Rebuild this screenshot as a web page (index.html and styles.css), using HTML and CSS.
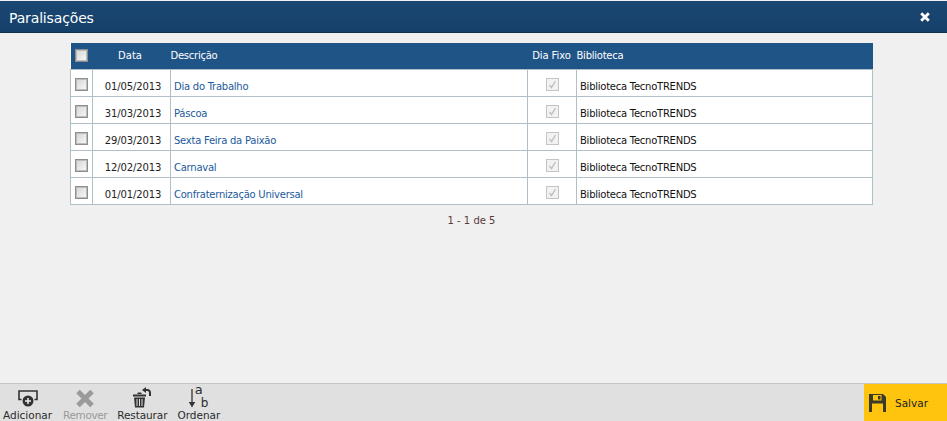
FILE: index.html
```html
<!DOCTYPE html>
<html lang="pt">
<head>
<meta charset="utf-8">
<title>Paralisações</title>
<link rel="stylesheet" href="styles.css">
</head>
<body>
<div class="dialog">
  <header class="titlebar">
    <h1 class="title">Paralisações</h1>
    <svg class="close" width="10" height="10" viewBox="0 0 10 10"><path d="M1.2 1.200l7.600 7.600M8.800 1.200l-7.600 7.600" stroke="#fff" stroke-width="2.800" fill="none"/></svg>
  </header>
  <main class="content">
    <table class="grid">
      <thead>
        <tr>
          <th class="c-check"><span class="box"></span></th>
          <th class="c-date">Data</th>
          <th class="c-desc">Descrição</th>
          <th class="c-fix">Dia Fixo</th>
          <th class="c-lib">Biblioteca</th>
        </tr>
      </thead>
      <tbody>
        <tr><td class="c-check"><span class="box"></span></td><td class="c-date">01/05/2013</td><td class="c-desc"><a>Dia do Trabalho</a></td><td class="c-fix"><span class="tick"><svg width="11" height="11" viewBox="0 0 11 11"><path d="M2.500 6l2 2.500 4-6.500" stroke="#bdbdbd" stroke-width="1.300" fill="none"/></svg></span></td><td class="c-lib">Biblioteca TecnoTRENDS</td></tr>
        <tr><td class="c-check"><span class="box"></span></td><td class="c-date">31/03/2013</td><td class="c-desc"><a>Páscoa</a></td><td class="c-fix"><span class="tick"><svg width="11" height="11" viewBox="0 0 11 11"><path d="M2.500 6l2 2.500 4-6.500" stroke="#bdbdbd" stroke-width="1.300" fill="none"/></svg></span></td><td class="c-lib">Biblioteca TecnoTRENDS</td></tr>
        <tr><td class="c-check"><span class="box"></span></td><td class="c-date">29/03/2013</td><td class="c-desc"><a>Sexta Feira da Paixão</a></td><td class="c-fix"><span class="tick"><svg width="11" height="11" viewBox="0 0 11 11"><path d="M2.500 6l2 2.500 4-6.500" stroke="#bdbdbd" stroke-width="1.300" fill="none"/></svg></span></td><td class="c-lib">Biblioteca TecnoTRENDS</td></tr>
        <tr><td class="c-check"><span class="box"></span></td><td class="c-date">12/02/2013</td><td class="c-desc"><a>Carnaval</a></td><td class="c-fix"><span class="tick"><svg width="11" height="11" viewBox="0 0 11 11"><path d="M2.500 6l2 2.500 4-6.500" stroke="#bdbdbd" stroke-width="1.300" fill="none"/></svg></span></td><td class="c-lib">Biblioteca TecnoTRENDS</td></tr>
        <tr><td class="c-check"><span class="box"></span></td><td class="c-date">01/01/2013</td><td class="c-desc"><a>Confraternização Universal</a></td><td class="c-fix"><span class="tick"><svg width="11" height="11" viewBox="0 0 11 11"><path d="M2.500 6l2 2.500 4-6.500" stroke="#bdbdbd" stroke-width="1.300" fill="none"/></svg></span></td><td class="c-lib">Biblioteca TecnoTRENDS</td></tr>
      </tbody>
    </table>
    <p class="pager">1 - 1 de 5</p>
  </main>
  <footer class="toolbar">
    <div class="actions">
      <button class="action a-add">
        <svg width="22" height="19" viewBox="0 0 22 19"><path d="M4.500 10.500H2V2h18v8.500h-2.500" stroke="#333" stroke-width="1.600" fill="none"/><circle cx="11" cy="12" r="5.500" fill="#333"/><path d="M11 9v6M8 12h6" stroke="#f0f0f0" stroke-width="1.500"/></svg>
        <span>Adicionar</span>
      </button>
      <button class="action a-remove">
        <svg width="20" height="19" viewBox="0 0 20 19"><path d="M3 2.500l14 14M17 2.500l-14 14" stroke="#9a9a9a" stroke-width="5" fill="none"/></svg>
        <span>Remover</span>
      </button>
      <button class="action a-restore">
        <svg class="icon-over" width="20" height="19" viewBox="0 0 20 19"><path d="M1 5.500h13v2H1z" fill="#333"/><path d="M2 8.500h11l-1 10H3z" fill="#333"/><path d="M5 10v7M7.500 10v7M10 10v7" stroke="#e0e0e0" stroke-width="1"/><path d="M5 5l1-1.500h3L10 5z" fill="#333"/><path d="M13 1h2.500A2.500 2.500 0 0 1 18 3.500V7" stroke="#333" stroke-width="2" fill="none"/><path d="M14 -2v6l-4-3z" fill="#333"/></svg>
        <span>Restaurar</span>
      </button>
      <button class="action a-sort">
        <span class="sort-icon"><svg width="8" height="19" viewBox="0 0 8 19"><path d="M4 0v15" stroke="#333" stroke-width="1.300"/><path d="M.8 13h6.400L4 18.500z" fill="#333"/></svg><span class="sort-a">a</span><span class="sort-b">b</span></span>
        <span>Ordenar</span>
      </button>
    </div>
    <button class="save">
      <svg width="17" height="18" viewBox="0 0 17 18"><path d="M0 0h14l3 3v15H0z" fill="#3a3a2a"/><path d="M4 1h8.500v5.500H4z" fill="#ffc40d"/><rect x="9" y="2" width="2.500" height="3.500" fill="#3a3a2a"/><path d="M3 9.500h11V18H3z" fill="#ffc40d"/></svg>
      <span>Salvar</span>
    </button>
  </footer>
</div>
</body>
</html>
```
FILE: styles.css
```css
* { box-sizing: border-box; }
html, body { margin: 0; height: 100%; }
body { font-family: "DejaVu Sans", sans-serif; font-size: 10px; color: #222; background: #f0f0f0; overflow: hidden; }
.dialog { display: flex; flex-direction: column; height: 421px; }
.titlebar { height: 32px; margin-top: 1px; flex: none; display: flex; align-items: center; justify-content: space-between; padding: 0 17px 0 9px; background: linear-gradient(#1a4772, #15406a); border-bottom: 1px solid #0e2f4e; color: #fff; }
.title { margin: 0; padding-top: 2px; font-size: 14px; font-weight: 400; letter-spacing: -0.15px; }
.close { display: block; }
.content { flex: 1; padding: 10px 74px 0 70px; }
.grid { width: 803px; border-collapse: collapse; table-layout: fixed; background: #fff; letter-spacing: -0.25px; }
.grid th { height: 26px; padding: 0; background: #1f5487; color: #fff; font-weight: 400; text-align: left; border: 0; }
.grid td { height: 27px; padding: 0; border: 1px solid #b0c0c8; vertical-align: middle; }
.c-check { width: 22px; }
.c-date { width: 78px; text-align: center; }
.c-fix { width: 49px; text-align: center; }
.c-lib { width: 296px; }
.grid th.c-date { text-align: center; padding-right: 3px; letter-spacing: 0; }
.grid th.c-fix { text-align: center; padding-right: 1px; letter-spacing: -0.1px; }
.grid td.c-date { padding-top: 8px; padding-left: 3px; letter-spacing: -0.1px; }
.grid td.c-desc { padding: 8px 0 0 3px; color: #1c5a9c; }
.grid td.c-lib { padding: 8px 0 0 3px; color: #111; }
.grid td.c-check { padding: 3px 0 0 4px; }
.grid th.c-check { padding-left: 4px; }
.grid th.c-lib { padding-left: 0; }
.box { display: block; width: 13px; height: 13px; border: 1px solid #8e8e8e; background: linear-gradient(135deg, #d4d4d4, #fafafa); box-shadow: inset 0 0 0 1px #bcbcbc; }
.tick { display: block; width: 13px; height: 13px; margin: 3px auto 0; border: 1px solid #c4c4c4; background: #f2f2f2; }
.tick svg { display: block; }
.pager { margin: 10px 0 0; text-align: center; color: #5a3a3a; }
.toolbar { flex: none; height: 38px; display: flex; justify-content: space-between; background: #e0e0e0; border-top: 1px solid #c4c4c4; }
.actions { display: flex; padding-left: 3px; gap: 10px; font-size: 10.500px; }
.action { display: flex; flex-direction: column; align-items: center; justify-content: flex-end; gap: 1px; padding: 0; border: 0; background: none; font: inherit; color: #2c2c2c; }
.a-add { margin-right: 1px; }
.a-remove { color: #9a9a9a; letter-spacing: -0.4px; }
.a-restore { letter-spacing: -0.1px; }
.icon-over { overflow: visible; }
.sort-icon { position: relative; display: block; width: 26px; height: 19px; margin-left: -6px; padding-left: 5px; }
.sort-icon svg { display: block; }
.sort-a { position: absolute; left: 12px; top: -7px; font-size: 13px; }
.sort-b { position: absolute; left: 18px; top: 7px; font-size: 12px; }
.save { width: 83px; display: flex; align-items: center; gap: 9px; padding: 0 0 0 5px; border: 0; background: #ffc40d; font: inherit; font-size: 10.500px; color: #222; }
```
